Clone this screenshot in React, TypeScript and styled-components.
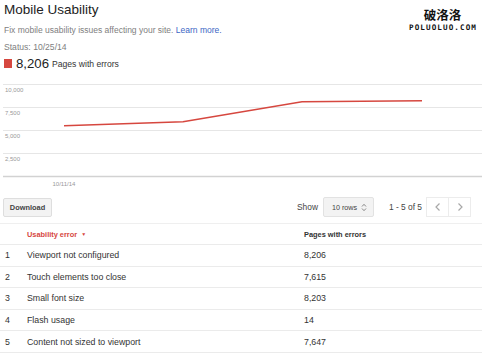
import styled, { createGlobalStyle } from 'styled-components';

const GlobalStyle = createGlobalStyle`
  html, body {
    margin: 0;
    padding: 0;
    background: #fff;
    font-family: 'Liberation Sans', Arial, sans-serif;
  }
`;

const RED = '#d6473f';

const rows = [
  { id: 1, name: 'Viewport not configured', count: '8,206' },
  { id: 2, name: 'Touch elements too close', count: '7,615' },
  { id: 3, name: 'Small font size', count: '8,203' },
  { id: 4, name: 'Flash usage', count: '14' },
  { id: 5, name: 'Content not sized to viewport', count: '7,647' },
];

const gridLines = [
  { y: 4.5, label: '10,000' },
  { y: 27.5, label: '7,500' },
  { y: 50.5, label: '5,000' },
  { y: 73.5, label: '2,500' },
];

const points = [
  [64, 45.7],
  [183, 41.7],
  [302, 21.7],
  [422, 20.7],
];

const Chart = () => (
  <ChartSvg width={488} height={112} viewBox="0 0 488 112">
    {gridLines.map((g) => (
      <g key={g.label}>
        <line x1={3} x2={482} y1={g.y} y2={g.y} stroke="#e6e6e6" strokeWidth={1} />
        <text x={5} y={g.y + 7} fontSize={6} fill="#999">
          {g.label}
        </text>
      </g>
    ))}
    <line x1={3} x2={482} y1={96.5} y2={96.5} stroke="#d2d2d2" strokeWidth={1.4} />
    <text x={64} y={105.5} fontSize={6} fill="#999" textAnchor="middle">
      10/11/14
    </text>
    <polyline
      points={points.map((p) => p.join(',')).join(' ')}
      fill="none"
      stroke={RED}
      strokeWidth={1.5}
    />
  </ChartSvg>
);

const Chevron = ({ dir }: { dir: 'left' | 'right' }) => (
  <svg width="8" height="10" viewBox="0 0 8 10">
    <path
      d={dir === 'left' ? 'M5.5 1.5 L2 5 L5.5 8.5' : 'M2.5 1.5 L6 5 L2.5 8.5'}
      fill="none"
      stroke="#a8a8a8"
      strokeWidth={1.2}
    />
  </svg>
);

const SelectArrows = () => (
  <svg width="6" height="9" viewBox="0 0 6 9">
    <path d="M1 3.5 L3 1.3 L5 3.5" fill="none" stroke="#888" strokeWidth={1} />
    <path d="M1 5.5 L3 7.7 L5 5.5" fill="none" stroke="#888" strokeWidth={1} />
  </svg>
);

export default function App() {
  return (
    <Page>
      <GlobalStyle />
      <Header>
        <Title>Mobile Usability</Title>
        <Subtitle>
          Fix mobile usability issues affecting your site. <Link>Learn more.</Link>
        </Subtitle>
        <Status>Status: 10/25/14</Status>
        <CountRow>
          <Swatch />
          <Count>8,206</Count>
          <CountLabel>Pages with errors</CountLabel>
        </CountRow>
        <Watermark>
          <WatermarkCn>破洛洛</WatermarkCn>
          <WatermarkUrl>POLUOLUO.COM</WatermarkUrl>
        </Watermark>
      </Header>

      <Chart />

      <Toolbar>
        <Button>Download</Button>
        <Controls>
          <ShowLabel>Show</ShowLabel>
          <Select>
            10 rows
            <SelectArrows />
          </Select>
          <PageInfo>1 - 5 of 5</PageInfo>
          <Pager>
            <PagerButton>
              <Chevron dir="left" />
            </PagerButton>
            <PagerButton>
              <Chevron dir="right" />
            </PagerButton>
          </Pager>
        </Controls>
      </Toolbar>

      <Table>
        <HeadRow>
          <span />
          <SortHead>
            Usability error <SortArrow>▼</SortArrow>
          </SortHead>
          <HeadCell>Pages with errors</HeadCell>
        </HeadRow>
        {rows.map((r) => (
          <Row key={r.id}>
            <Cell>{r.id}</Cell>
            <Cell>{r.name}</Cell>
            <Cell>{r.count}</Cell>
          </Row>
        ))}
      </Table>
    </Page>
  );
}

const Page = styled.div`
  width: 488px;
  height: 356px;
  overflow: hidden;
  position: relative;
`;

const Header = styled.div`
  position: relative;
  padding: 2px 5px 9px 4px;
  display: flex;
  flex-direction: column;
`;

const Title = styled.div`
  font-size: 13.5px;
  line-height: 16px;
  color: #222;
`;

const Subtitle = styled.div`
  margin-top: 6px;
  font-size: 8.5px;
  line-height: 12px;
  color: #808080;
`;

const Link = styled.span`
  color: #3b66c4;
`;

const Status = styled.div`
  margin-top: 5px;
  font-size: 8.6px;
  line-height: 12px;
  color: #808080;
`;

const CountRow = styled.div`
  margin-top: 2px;
  display: flex;
  align-items: center;
  height: 16px;
`;

const Swatch = styled.span`
  width: 8px;
  height: 9px;
  background: ${RED};
  margin-right: 4px;
`;

const Count = styled.span`
  font-size: 13.2px;
  color: #222;
  margin-right: 3px;
`;

const CountLabel = styled.span`
  font-size: 8.6px;
  color: #333;
  padding-top: 2px;
`;

const Watermark = styled.div`
  position: absolute;
  left: 405px;
  top: 7px;
  width: 75px;
  display: flex;
  flex-direction: column;
  align-items: center;
`;

const WatermarkCn = styled.div`
  font-family: 'Noto Sans CJK SC', sans-serif;
  font-size: 12.5px;
  font-weight: bold;
  line-height: 16px;
  color: #111;
`;

const WatermarkUrl = styled.div`
  font-family: 'DejaVu Sans Mono', monospace;
  font-size: 7.6px;
  font-weight: bold;
  line-height: 9px;
  letter-spacing: 1.1px;
  color: #111;
  margin-left: 1px;
`;

const ChartSvg = styled.svg`
  display: block;
  font-family: 'Liberation Sans', Arial, sans-serif;
`;

const Toolbar = styled.div`
  margin-top: 5px;
  height: 20px;
  padding: 0 17px 0 3px;
  display: flex;
  align-items: center;
  justify-content: space-between;
`;

const Button = styled.div`
  box-sizing: border-box;
  width: 49px;
  height: 19px;
  display: flex;
  align-items: center;
  justify-content: center;
  background: #f3f3f3;
  border: 1px solid #dedede;
  border-radius: 2px;
  font-size: 7.4px;
  font-weight: bold;
  color: #444;
`;

const Controls = styled.div`
  display: flex;
  align-items: center;
`;

const ShowLabel = styled.span`
  font-size: 8.4px;
  color: #444;
  margin-right: 5px;
`;

const Select = styled.div`
  box-sizing: border-box;
  width: 51px;
  height: 20px;
  padding: 0 6px 0 8px;
  display: flex;
  align-items: center;
  justify-content: space-between;
  background: #f3f3f3;
  border: 1px solid #e2e2e2;
  border-radius: 2px;
  font-size: 7.2px;
  color: #444;
`;

const PageInfo = styled.span`
  margin-left: 15px;
  font-size: 8.4px;
  color: #444;
`;

const Pager = styled.div`
  margin-left: 4px;
  display: flex;
`;

const PagerButton = styled.div`
  box-sizing: border-box;
  width: 23px;
  height: 20px;
  display: flex;
  align-items: center;
  justify-content: center;
  border: 1px solid #ececec;
  & + & {
    margin-left: -1px;
  }
`;

const Table = styled.div`
  margin-top: 6px;
  width: 482px;
  border-top: 1px solid #efefef;
`;

const HeadRow = styled.div`
  box-sizing: border-box;
  height: 21px;
  display: grid;
  grid-template-columns: 22px 277px 1fr;
  align-items: center;
  padding-left: 5px;
  border-bottom: 1px solid #ebebeb;
  font-size: 7.4px;
  font-weight: bold;
`;

const SortHead = styled.span`
  color: ${RED};
`;

const SortArrow = styled.span`
  font-size: 5px;
  margin-left: 2px;
  vertical-align: 1px;
`;

const HeadCell = styled.span`
  color: #333;
`;

const Row = styled.div`
  box-sizing: border-box;
  height: 21.6px;
  display: grid;
  grid-template-columns: 22px 277px 1fr;
  align-items: center;
  padding-left: 5px;
  border-bottom: 1px solid #ebebeb;
  font-size: 8.8px;
  color: #333;
`;

const Cell = styled.span``;
